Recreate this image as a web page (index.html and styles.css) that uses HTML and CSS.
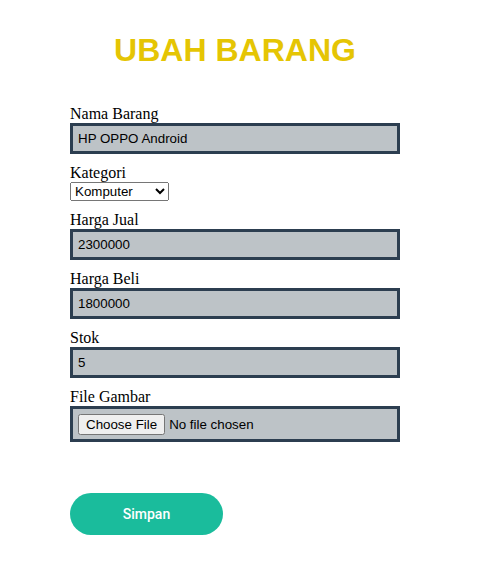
FILE: index.html
```html
<!DOCTYPE html>
<html>
<head>
<meta charset="utf-8">
<link rel="stylesheet" href="styles.css">
</head>
<body>
<div class="container">
  <h1 class="title">UBAH BARANG</h1>
  <form class="form">
    <div class="field">
      <label class="label">Nama Barang</label>
      <input class="input" type="text" value="HP OPPO Android">
    </div>
    <div class="field">
      <label class="label">Kategori</label>
      <select class="select">
        <option>Komputer</option>
        <option>Elektronik</option>
        <option>Hand Phone</option>
      </select>
    </div>
    <div class="field">
      <label class="label">Harga Jual</label>
      <input class="input" type="text" value="2300000">
    </div>
    <div class="field">
      <label class="label">Harga Beli</label>
      <input class="input" type="text" value="1800000">
    </div>
    <div class="field">
      <label class="label">Stok</label>
      <input class="input" type="text" value="5">
    </div>
    <div class="field">
      <label class="label">File Gambar</label>
      <input class="input file" type="file">
    </div>
    <button class="btn" type="button">Simpan</button>
  </form>
</div>
</body>
</html>
```

FILE: styles.css
```css
html, body {
  margin: 0;
  padding: 0;
  background: #ffffff;
}
body {
  font-family: "Liberation Serif", "Times New Roman", serif;
  font-size: 16px;
}
.container {
  width: 330px;
  margin: 0 0 0 70px;
  padding-top: 32px;
}
.title {
  margin: 0 0 36px 0;
  font-family: "Liberation Sans", Arial, sans-serif;
  font-size: 32px;
  line-height: 37px;
  font-weight: bold;
  color: #e5c504;
  text-align: center;
}
.form {
  display: flex;
  flex-direction: column;
}
.field {
  display: flex;
  flex-direction: column;
  align-items: flex-start;
  margin-bottom: 10px;
}
.label {
  display: block;
  line-height: 18px;
  color: #000;
}
.input {
  box-sizing: border-box;
  width: 330px;
  height: 31px;
  margin: 0;
  padding: 0 5px;
  border: 3px solid #2c3e50;
  background: #bdc3c7;
  font-family: "Liberation Sans", Arial, sans-serif;
  font-size: 13.333px;
  color: #000;
  outline: none;
}
.file {
  height: 36px;
  padding: 5px 5px;
}
.select {
  box-sizing: border-box;
  width: 99px;
  height: 19px;
  margin: 0;
  font-family: "Liberation Sans", Arial, sans-serif;
  font-size: 13.333px;
}
.btn {
  align-self: flex-start;
  margin-top: 41px;
  width: 153px;
  height: 42px;
  border: none;
  border-radius: 21px;
  background: #1abc9c;
  color: #ffffff;
  font-family: Roboto, "Open Sans", sans-serif;
  font-size: 14px;
  font-weight: 500;
  cursor: pointer;
}
```
